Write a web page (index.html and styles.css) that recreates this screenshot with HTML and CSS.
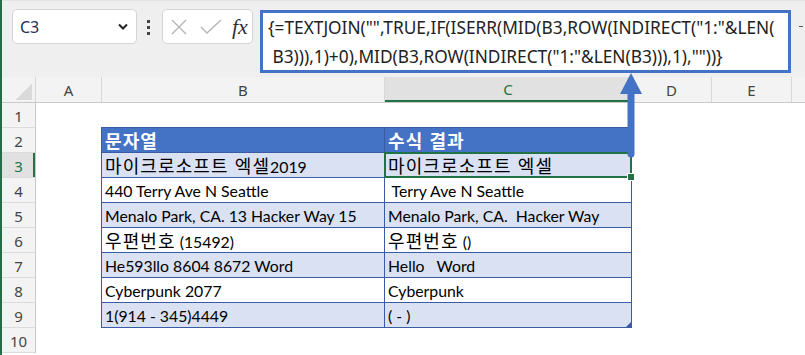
FILE: index.html
```html
<!DOCTYPE html>
<html lang="ko">
<head>
   <meta charset="utf-8">
   <title>TEXTJOIN 숫자 제거</title>
   <link rel="stylesheet" href="styles.css">
</head>
<body>
   <div class="app">
      <!-- formula bar -->
      <div class="topbar">
         <div class="namebox">
            <span>C3</span>
            <svg class="chev" width="10" height="7" viewBox="0 0 10 7"><polyline points="1,1.5 5,5.5 9,1.5" fill="none" stroke="#222" stroke-width="2"/></svg>
         </div>
         <div class="grip"><i></i><i></i><i></i></div>
         <div class="fxbox">
            <svg width="18" height="18" viewBox="0 0 18 18"><path d="M2 2 L16 16 M16 2 L2 16" stroke="#b4b4b4" stroke-width="1.4" fill="none"/></svg>
            <svg width="22" height="18" viewBox="0 0 22 18"><path d="M1 9 L7 15 L21 2" stroke="#b4b4b4" stroke-width="1.4" fill="none"/></svg>
            <span class="fx">fx</span>
         </div>
         <div class="formula">{=TEXTJOIN("",TRUE,IF(ISERR(MID(B3,ROW(INDIRECT("1:"&amp;LEN(
 B3))),1)+0),MID(B3,ROW(INDIRECT("1:"&amp;LEN(B3))),1),""))}</div>
         <div class="collapse"></div>
      </div>

      <!-- column headers -->
      <div class="colheads">
         <div class="corner"></div>
         <div class="ch col-a">A</div>
         <div class="ch col-b">B</div>
         <div class="ch col-c active">C</div>
         <div class="ch col-d">D</div>
         <div class="ch col-e">E</div>
         <div class="ch col-rest"></div>
      </div>

      <div class="sheet">
         <div class="rowheads">
            <div class="rh">1</div>
            <div class="rh">2</div>
            <div class="rh active">3</div>
            <div class="rh">4</div>
            <div class="rh">5</div>
            <div class="rh">6</div>
            <div class="rh">7</div>
            <div class="rh">8</div>
            <div class="rh">9</div>
            <div class="rh">10</div>
         </div>
         <div class="cells">
            <div class="tbl">
               <div class="td th"><span class="ko">문자열</span></div>
               <div class="td th"><span class="ko">수식 결과</span></div>

               <div class="td band"><span class="ko">마이크로소프트 엑셀</span>2019</div>
               <div class="td band sel"><span class="ko">마이크로소프트 엑셀</span></div>

               <div class="td">440 Terry Ave N Seattle</div>
               <div class="td">&nbsp;Terry Ave N Seattle</div>

               <div class="td band">Menalo Park, CA. 13 Hacker Way 15</div>
               <div class="td band">Menalo Park, CA.&nbsp; Hacker Way</div>

               <div class="td"><span class="ko">우편번호</span> (15492)</div>
               <div class="td"><span class="ko">우편번호</span> ()</div>

               <div class="td band">He593llo 8604 8672 Word</div>
               <div class="td band">Hello &nbsp; Word</div>

               <div class="td">Cyberpunk 2077</div>
               <div class="td">Cyberpunk</div>

               <div class="td band">1(914 - 345)4449</div>
               <div class="td band last">( - )</div>
            </div>
         </div>
      </div>

      <!-- callout arrow from C3 to the formula bar -->
      <svg class="arrow" width="26" height="88" viewBox="0 0 26 88">
         <path d="M2 22 L13 1 L24 22 Z" fill="#4472c4"/>
         <path d="M9.5 21 H16.5 V82 A3.5 3.5 0 0 1 9.5 82 Z" fill="#4472c4"/>
      </svg>
   </div>
</body>
</html>
```
FILE: styles.css
```css
/* sheet layout */
html, body {
   margin: 0;
   padding: 0;
   background: white;
}
.app {
   position: relative;
   width: 803px;
   height: 355px;
   overflow: hidden;
   border-left: 2px solid #1e7145;
   font-family: "Noto Sans", "Open Sans", sans-serif;
   color: #222;
}

/* ---- formula bar ---- */
.topbar {
   display: flex;
   align-items: flex-start;
   height: 77px;
   padding-top: 8px;
   box-sizing: border-box;
   background: #efefef;
   border-top: 1px solid #e2e2e2;
}
.namebox {
   display: flex;
   align-items: center;
   justify-content: space-between;
   width: 125px;
   height: 35px;
   margin-left: 10px;
   padding: 0 8px 0 7px;
   box-sizing: border-box;
   background: white;
   border: 1px solid #d4d4d4;
   border-radius: 5px;
   font-size: 16px;
   color: #1f2d5a;
}
.grip {
   display: flex;
   flex-direction: column;
   gap: 3px;
   margin: 11px 12px 0 10px;
}
.grip i {
   display: block;
   width: 3px;
   height: 3px;
   background: #444;
}
.fxbox {
   display: flex;
   align-items: center;
   gap: 12px;
   width: 91px;
   height: 35px;
   padding-left: 7px;
   box-sizing: border-box;
   background: white;
   border: 1px solid #d4d4d4;
   border-radius: 5px;
}
.fx {
   font-family: "Liberation Serif", serif;
   font-style: italic;
   font-size: 22px;
   color: #333;
   margin-left: -2px;
}
.formula {
   width: 531px;
   height: 63px;
   margin: 1px 0 0 7px;
   padding: 0 0 0 5px;
   box-sizing: border-box;
   background: white;
   border: 3px solid #4472c4;
   white-space: pre;
   font-size: 17.3px;
   line-height: 29px;
   color: #222;
}
.collapse {
   width: 4px;
   height: 1px;
   margin: 17px 0 0 8px;
   background: #555;
}

/* ---- headers ---- */
.colheads {
   display: flex;
   height: 26px;
   background: #f3f3f3;
   border-bottom: 1px solid #c9c9c9;
   box-sizing: border-box;
   font-size: 15px;
   color: #444;
}
.corner {
   width: 33px;
   flex: none;
   border-right: 1px solid #d8d8d8;
   background: linear-gradient(135deg, transparent 50%, #dadada 50%) no-repeat right 3px bottom 2px / 17px 17px;
}
.ch {
   flex: none;
   display: flex;
   align-items: center;
   justify-content: center;
   border-right: 1px solid #d8d8d8;
   box-sizing: border-box;
   padding-top: 1px;
}
.ch.active {
   background: #e1e1e1;
   color: #217346;
   border-bottom: 2px solid #217346;
}
.col-a { width: 66px; }
.col-b { width: 283px; }
.col-c { width: 247px; }
.col-d { width: 80px; }
.col-e { width: 80px; }
.col-rest { flex: 1; border-right: 0; }

.sheet {
   display: flex;
}
.rowheads {
   width: 33px;
   flex: none;
   background: #f3f3f3;
   border-right: 1px solid #c9c9c9;
   font-size: 15px;
   color: #444;
}
.rh {
   height: 25px;
   display: flex;
   align-items: center;
   justify-content: center;
   border-bottom: 1px solid #dcdcdc;
   box-sizing: border-box;
   padding-top: 1px;
}
.rh.active {
   background: #e1e1e1;
   color: #217346;
   box-shadow: inset -2px 0 0 #217346;
}

/* ---- table ---- */
.cells {
   flex: 1;
   padding: 24px 0 0 65px;
}
.tbl {
   display: grid;
   grid-template-columns: 283px 247px;
   grid-auto-rows: 25px;
   width: 531px;
   border-left: 1px solid #3a5ca5;
   border-top: 1px solid #3a5ca5;
   font-family: Lato, "Noto Sans CJK KR", sans-serif;
   font-size: 15.8px;
   color: #000;
}
.td {
   position: relative;
   padding: 1px 3px 0;
   border-right: 1px solid #3a5ca5;
   border-bottom: 1px solid #3a5ca5;
   line-height: 23px;
   white-space: pre;
   overflow: visible;
}
.td.th {
   background: #4472c4;
   color: white;
   font-weight: bold;
}
.td.band {
   background: #d9e1f2;
}
.ko {
   font-family: "Noto Sans CJK KR", sans-serif;
   font-size: 18px;
   letter-spacing: 1.1px;
}
.td.sel::after {
   content: "";
   position: absolute;
   left: -1px;
   top: -1px;
   right: -1px;
   bottom: -1px;
   border: 2px solid #217346;
}
.td.sel::before {
   content: "";
   position: absolute;
   right: -4px;
   bottom: -4px;
   width: 6px;
   height: 6px;
   background: #217346;
   border: 1px solid white;
   z-index: 1;
}
.td.last::after {
   content: "";
   position: absolute;
   right: 0;
   bottom: 0;
   width: 5px;
   height: 5px;
   background: #3a5ca5;
   clip-path: polygon(100% 0, 100% 100%, 0 100%);
}

.arrow {
   position: absolute;
   left: 616px;
   top: 72px;
}
```
